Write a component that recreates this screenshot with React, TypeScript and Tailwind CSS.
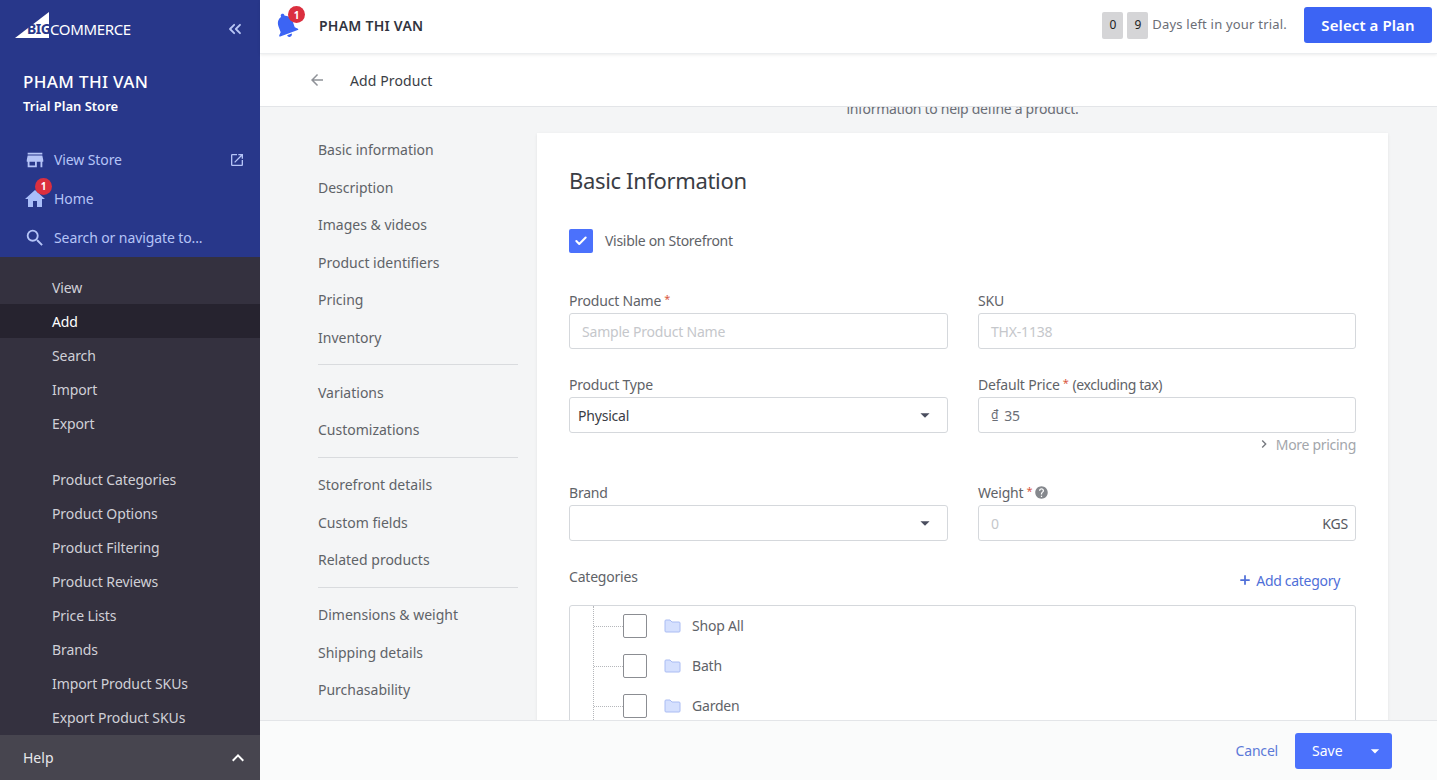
import { Check, ChevronsLeft, Plus } from 'lucide-react';
import {
  MdArrowBack,
  MdArrowDropDown,
  MdChevronRight,
  MdHelp,
  MdHome,
  MdKeyboardArrowUp,
  MdNotifications,
  MdOpenInNew,
  MdSearch,
  MdStore,
} from 'react-icons/md';

const navTop = ['View', 'Add', 'Search', 'Import', 'Export'];
const navBottom = [
  'Product Categories',
  'Product Options',
  'Product Filtering',
  'Product Reviews',
  'Price Lists',
  'Brands',
  'Import Product SKUs',
  'Export Product SKUs',
];
const sections = [
  ['Basic information', 'Description', 'Images & videos', 'Product identifiers', 'Pricing', 'Inventory'],
  ['Variations', 'Customizations'],
  ['Storefront details', 'Custom fields', 'Related products'],
  ['Dimensions & weight', 'Shipping details', 'Purchasability'],
];
const categories = ['Shop All', 'Bath', 'Garden'];

function Badge({ className }: { className: string }) {
  return (
    <span className={`absolute flex h-[17px] w-[17px] items-center justify-center rounded-full bg-[#db2f3f] text-[10px] font-bold leading-none text-white ${className}`}>
      1
    </span>
  );
}

function Star() {
  return <span className="-mt-[4px] ml-[3px] text-[11px] leading-none text-[#d9583f]">*</span>;
}

function Label({ text, required, suffix }: { text: string; required?: boolean; suffix?: string }) {
  return (
    <div className="mb-[2px] flex h-[21px] items-center text-[14px] tracking-[-0.2px] text-[#5f6368]">
      {text}
      {required && <Star />}
      {suffix && <span className="ml-[4px] tracking-[-0.4px]">{suffix}</span>}
    </div>
  );
}

function Box({ children }: { children: React.ReactNode }) {
  return (
    <div className="flex h-[36px] items-center rounded-[3px] border border-[#d5d8dc] bg-white px-[12px] text-[14px] tracking-[-0.2px]">
      {children}
    </div>
  );
}

function Caret() {
  return <MdArrowDropDown className="ml-auto mr-[-7px] h-[22px] w-[22px] text-[#4a4d5e]" />;
}

function Folder() {
  return (
    <svg width="17" height="14" viewBox="0 0 17 14" className="ml-[17px]">
      <path d="M1 3V2a1 1 0 0 1 1-1h4l2 2h7a1 1 0 0 1 1 1v8a1 1 0 0 1-1 1H2a1 1 0 0 1-1-1V3z" fill="#d5e0fe" stroke="#aabcf3" strokeWidth="1" />
    </svg>
  );
}

export default function App() {
  return (
    <div className="flex h-screen overflow-hidden bg-white font-['Noto_Sans',sans-serif]">
      <aside className="flex w-[260px] shrink-0 flex-col bg-[#34313f]">
        <div className="h-[257px] bg-[#28378a] pl-[15px] text-white">
          <div className="flex h-[53px] items-center pr-[15px]">
            <div className="relative -mt-[3px] flex h-[26px] w-[116px] items-end">
              <svg width="34" height="26" viewBox="0 0 34 26" className="absolute left-0 top-0">
                <polygon points="0,26 34,0 34,26" fill="#fff" />
              </svg>
              <span className="absolute bottom-[1px] left-[12px] text-[14px] font-bold leading-[16px] tracking-[-0.5px] text-[#28378a]">BIG</span>
              <span className="absolute bottom-[1px] left-[35px] text-[15px] leading-[16px] tracking-[-0.35px] text-white">COMMERCE</span>
            </div>
            <ChevronsLeft className="ml-auto mt-[5px] h-[20px] w-[20px] text-[#b8c6f5]" strokeWidth={2.2} />
          </div>
          <div className="pl-[8px] pt-[17px] text-[17px] font-medium leading-[24px] tracking-[0.35px]">PHAM THI VAN</div>
          <div className="pl-[8px] pt-[3px] text-[13px] font-semibold leading-[18px]">Trial Plan Store</div>
          <div className="pt-[25px] text-[14px] tracking-[-0.1px] text-[#b5c4f7]">
            <div className="flex h-[39px] items-center pl-[9px] pr-[15px]">
              <MdStore className="h-[22px] w-[22px]" />
              <span className="ml-[8px]">View Store</span>
              <MdOpenInNew className="ml-auto h-[16px] w-[16px]" />
            </div>
            <div className="flex h-[39px] items-center pl-[9px]">
              <span className="relative">
                <MdHome className="-ml-[1px] h-[24px] w-[24px] text-[#a9bdf9]" />
                <Badge className="-top-[9px] left-[11px]" />
              </span>
              <span className="ml-[7px]">Home</span>
            </div>
            <div className="flex h-[39px] items-center pl-[9px]">
              <MdSearch className="h-[22px] w-[22px]" />
              <span className="ml-[8px]">Search or navigate to...</span>
            </div>
          </div>
        </div>

        <nav className="flex-1 overflow-hidden pt-[13px] text-[14px] tracking-[-0.1px] text-[#d0d0d7]">
          {navTop.map((item) => (
            <div key={item} className={`flex h-[34px] items-center pl-[52px] ${item === 'Add' ? 'bg-[#26232f] text-white' : ''}`}>
              {item}
            </div>
          ))}
          <div className="h-[22px]" />
          {navBottom.map((item) => (
            <div key={item} className="flex h-[34px] items-center pl-[52px]">
              {item}
            </div>
          ))}
        </nav>

        <div className="flex h-[45px] items-center bg-[#47454f] pl-[23px] pr-[10px] text-[14px] text-[#e8e8ec]">
          Help
          <MdKeyboardArrowUp className="ml-auto h-[24px] w-[24px] text-white" />
        </div>
      </aside>

      <main className="flex min-w-0 flex-1 flex-col">
        <header className="relative z-10 flex h-[54px] shrink-0 items-center border-b border-[#eceef0] bg-white pb-[3px] pl-[11px] pr-[5px] shadow-[0_1px_3px_rgba(0,0,0,0.08)]">
          <span className="relative">
            <MdNotifications className="h-[30px] w-[30px] -rotate-[20deg] text-[#3c64f4]" />
            <Badge className="-top-[4px] left-[17px]" />
          </span>
          <span className="ml-[18px] text-[14px] font-semibold tracking-[0.25px] text-[#313440]">PHAM THI VAN</span>
          <div className="ml-auto flex items-center">
            <span className="flex h-[27px] w-[21px] items-center justify-center rounded-[2px] bg-[#d5d5d7] text-[12px] text-[#222]">0</span>
            <span className="ml-[4px] flex h-[27px] w-[21px] items-center justify-center rounded-[2px] bg-[#d5d5d7] text-[12px] text-[#222]">9</span>
            <span className="ml-[4px] text-[13px] tracking-[0.2px] text-[#6b6e76]">Days left in your trial.</span>
            <button className="ml-[17px] h-[36px] w-[128px] rounded-[3px] bg-[#3c64f4] text-[15px] font-semibold tracking-[0.1px] text-white">Select a Plan</button>
          </div>
        </header>

        <div className="flex h-[53px] shrink-0 items-center border-b border-[#e3e5e8] bg-white pl-[48px]">
          <MdArrowBack className="h-[18px] w-[18px] text-[#8f9298]" />
          <span className="ml-[24px] text-[14px] tracking-[0.1px] text-[#3a3d45]">Add Product</span>
        </div>

        <div className="min-h-0 flex-1 overflow-hidden bg-[#f4f5f6]">
          <p className="-mt-[7px] h-[33px] pl-[277px] text-center text-[14px] leading-[18px] tracking-[-0.3px] text-[#6b6e76]">
            <span className="block w-[851px]">information to help define a product.</span>
          </p>
          <div className="flex pl-[58px]">
            <div className="-mt-[2px] w-[200px] shrink-0 text-[14px] tracking-[0px] text-[#5f6368]">
              {sections.map((group, i) => (
                <div key={i} className={i < 3 ? 'mb-[8.5px] border-b border-[#d9dbde] pb-[8px]' : ''}>
                  {group.map((item) => (
                    <div key={item} className="flex h-[37.5px] items-center">
                      {item}
                    </div>
                  ))}
                </div>
              ))}
            </div>

            <section className="ml-[19px] w-[851px] shrink-0 bg-white px-[32px] pt-[29px] shadow-[0_1px_3px_rgba(0,0,0,0.08)]">
              <h2 className="text-[22px] leading-[36px] tracking-[-0.35px] text-[#3a3d45]">Basic Information</h2>
              <div className="mt-[31px] flex h-[24px] items-center">
                <span className="flex h-[24px] w-[24px] items-center justify-center rounded-[2px] bg-[#4b71fc]">
                  <Check className="h-[14px] w-[14px] text-white" strokeWidth={3.5} />
                </span>
                <span className="-mt-[2px] ml-[12px] text-[14px] tracking-[-0.3px] text-[#5f6368]">Visible on Storefront</span>
              </div>

              <div className="mt-[37px] grid grid-cols-[379px_378px] gap-x-[30px]">
                <div>
                  <Label text="Product Name" required />
                  <Box><span className="text-[#c5c7cb]">Sample Product Name</span></Box>
                </div>
                <div>
                  <Label text="SKU" />
                  <Box><span className="text-[#c5c7cb]">THX-1138</span></Box>
                </div>

                <div className="mt-[25px]">
                  <Label text="Product Type" />
                  <div className="flex h-[36px] items-center rounded-[3px] border border-[#d5d8dc] bg-white px-[8px] text-[14px] tracking-[-0.2px] text-[#3a3d45]">
                    Physical
                    <span className="ml-auto pr-[10px]"><Caret /></span>
                  </div>
                </div>
                <div className="mt-[25px]">
                  <Label text="Default Price" required suffix="(excluding tax)" />
                  <Box>
                    <span className="text-[12px] text-[#6b6e76]">₫</span>
                    <span className="ml-[6px] text-[#6b6e76]">35</span>
                  </Box>
                  <div className="flex h-[22px] items-center justify-end text-[14px] tracking-[-0.3px] text-[#a3a6ab]">
                    <MdChevronRight className="mr-[4px] h-[16px] w-[16px] text-[#75787e]" />
                    More pricing
                  </div>
                </div>

                <div className="mt-[27px]">
                  <Label text="Brand" />
                  <div className="flex h-[36px] items-center rounded-[3px] border border-[#d5d8dc] bg-white px-[8px]">
                    <span className="ml-auto pr-[10px]"><Caret /></span>
                  </div>
                </div>
                <div className="mt-[27px]">
                  <div className="mb-[2px] flex h-[21px] items-center text-[14px] tracking-[-0.2px] text-[#5f6368]">
                    Weight<Star />
                    <MdHelp className="ml-[2px] h-[15px] w-[15px] text-[#85888d]" />
                  </div>
                  <div className="flex h-[36px] items-center rounded-[3px] border border-[#d5d8dc] bg-white px-[12px] text-[14px] tracking-[-0.2px]">
                    <span className="text-[#c5c7cb]">0</span>
                    <span className="-mr-[5px] ml-auto text-[#55585f]">KGS</span>
                  </div>
                </div>
              </div>

              <div className="mt-[23px] flex h-[24px] items-center text-[14px] tracking-[-0.2px] text-[#5f6368]">
                Categories
                <span className="ml-auto mr-[16px] mt-[8px] flex items-center tracking-[-0.3px] text-[#4f6fd8]">
                  <Plus className="h-[14px] w-[14px]" strokeWidth={3} />
                  <span className="ml-[4px]">Add category</span>
                </span>
              </div>

              <div className="mt-[17px] h-[200px] w-[787px] rounded-[3px] border border-[#d5d8dc] pl-[23px]">
                <div className="h-full border-l border-dotted border-[#b5b7bb]">
                  {categories.map((name) => (
                    <div key={name} className="flex h-[40px] items-center">
                      <span className="w-[29px] border-t border-dotted border-[#b5b7bb]" />
                      <span className="h-[24px] w-[24px] rounded-[2px] border border-[#8b8d92] bg-white" />
                      <Folder />
                      <span className="-mt-[2px] ml-[11px] text-[14px] tracking-[-0.2px] text-[#5f6368]">{name}</span>
                    </div>
                  ))}
                </div>
              </div>
            </section>
          </div>
        </div>

        <footer className="relative z-10 flex h-[60px] shrink-0 items-center justify-end border-t border-[#e3e5e8] bg-[#fafbfb] pr-[45px]">
          <span className="text-[14px] tracking-[-0.2px] text-[#5c79d8]">Cancel</span>
          <div className="ml-[17px] flex h-[36px] w-[97px] items-center rounded-[3px] bg-[#4b71fc] text-[14px] text-white">
            <span className="ml-[17px]">Save</span>
            <MdArrowDropDown className="ml-auto mr-[7px] h-[20px] w-[20px]" />
          </div>
        </footer>
      </main>
    </div>
  );
}
